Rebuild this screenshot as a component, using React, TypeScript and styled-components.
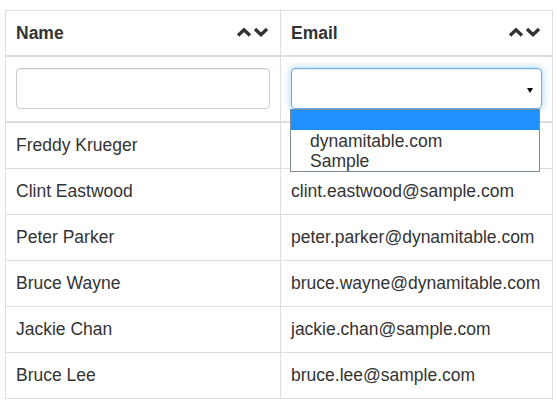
import React from "react";
import styled, { createGlobalStyle } from "styled-components";

const GlobalStyle = createGlobalStyle`
  html, body {
    margin: 0;
    padding: 0;
    background: #fff;
  }
  body, table, th, td, li {
    font-family: "Liberation Sans", Arial, sans-serif;
    color: #333;
  }
`;

const Page = styled.div`
  padding: 10px 5px;
`;

const Table = styled.table`
  width: 547px;
  table-layout: fixed;
  border-collapse: collapse;
  border: 1px solid #ddd;
  font-family: "Liberation Sans", Arial, sans-serif;
  font-size: 17.5px;
`;

const HeadCell = styled.th`
  text-align: left;
  font-weight: bold;
  font-size: 17.5px;
  padding: 12px 10px 11px;
  line-height: 21px;
  border: 1px solid #ddd;
  border-bottom: 2px solid #ddd;
`;

const HeadInner = styled.div`
  display: flex;
  align-items: center;
  justify-content: space-between;
`;

const SortIcons = styled.span`
  display: flex;
  gap: 1px;
  margin-top: -4px;
  margin-right: 1px;
`;

const FilterCell = styled.td`
  padding: 11px 10px 12px;
  border: 1px solid #ddd;
  border-bottom: 2px solid #ddd;
  vertical-align: top;
`;

const TextInput = styled.div`
  height: 39px;
  border: 1px solid #ccc;
  border-radius: 4px;
  box-shadow: inset 0 1px 1px rgba(0, 0, 0, 0.075);
`;

const SelectWrap = styled.div`
  position: relative;
`;

const SelectBox = styled.div`
  height: 39px;
  border: 1px solid #66afe9;
  border-radius: 4px;
  box-shadow: inset 0 1px 1px rgba(0, 0, 0, 0.075),
    0 0 8px rgba(102, 175, 233, 0.6);
  display: flex;
  align-items: center;
  justify-content: flex-end;
  padding-right: 8px;
`;

const Caret = styled.span`
  width: 0;
  height: 0;
  border-left: 3.5px solid transparent;
  border-right: 3.5px solid transparent;
  border-top: 5px solid #000;
  margin-top: 3px;
`;

const OptionList = styled.ul`
  position: absolute;
  top: 41px;
  left: -1px;
  width: 248px;
  margin: 0;
  padding: 0;
  list-style: none;
  border: 1px solid #7f8a96;
  background: #fff;
  z-index: 2;
`;

const Option = styled.li<{ $active?: boolean }>`
  height: 20px;
  line-height: 20px;
  padding-left: 19px;
  font-size: 17.5px;
  color: #333;
  background: ${(p) => (p.$active ? "#1e90ff" : "#fff")};
  margin-bottom: ${(p) => (p.$active ? "1px" : "0")};
`;

const Cell = styled.td`
  padding: 12px 10px;
  line-height: 21px;
  font-size: 17.5px;
  border: 1px solid #ddd;
  white-space: nowrap;
`;

const Chevron = ({ up }: { up?: boolean }) => (
  <svg width="16" height="12" viewBox="0 0 16 12">
    <polyline
      points={up ? "2,9.5 8,3.8 14,9.5" : "2,3 8,8.7 14,3"}
      fill="none"
      stroke="#333"
      strokeWidth="3.4"
      strokeLinejoin="miter"
    />
  </svg>
);

const people = [
  { name: "Freddy Krueger", email: "" },
  { name: "Clint Eastwood", email: "clint.eastwood@sample.com" },
  { name: "Peter Parker", email: "peter.parker@dynamitable.com" },
  { name: "Bruce Wayne", email: "bruce.wayne@dynamitable.com" },
  { name: "Jackie Chan", email: "jackie.chan@sample.com" },
  { name: "Bruce Lee", email: "bruce.lee@sample.com" },
];

const App = () => (
  <Page>
    <GlobalStyle />
    <Table>
      <colgroup>
        <col style={{ width: 275 }} />
        <col style={{ width: 272 }} />
      </colgroup>
      <thead>
        <tr>
          {["Name", "Email"].map((h) => (
            <HeadCell key={h}>
              <HeadInner>
                {h}
                <SortIcons>
                  <Chevron up />
                  <Chevron />
                </SortIcons>
              </HeadInner>
            </HeadCell>
          ))}
        </tr>
        <tr>
          <FilterCell>
            <TextInput />
          </FilterCell>
          <FilterCell>
            <SelectWrap>
              <SelectBox>
                <Caret />
              </SelectBox>
              <OptionList>
                <Option $active>&nbsp;</Option>
                <Option>dynamitable.com</Option>
                <Option>Sample</Option>
              </OptionList>
            </SelectWrap>
          </FilterCell>
        </tr>
      </thead>
      <tbody>
        {people.map((p) => (
          <tr key={p.name}>
            <Cell>{p.name}</Cell>
            <Cell>{p.email}</Cell>
          </tr>
        ))}
      </tbody>
    </Table>
  </Page>
);

export default App;
